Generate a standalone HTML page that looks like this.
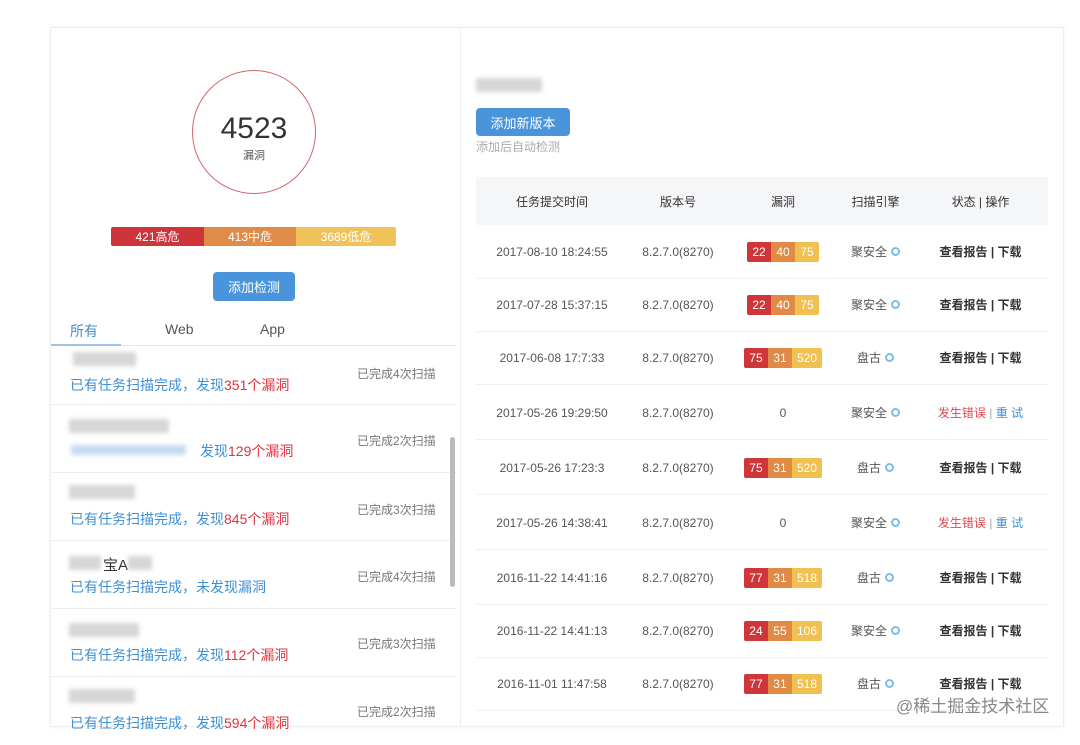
<!DOCTYPE html>
<html><head><meta charset="utf-8"><style>
*{margin:0;padding:0;box-sizing:border-box}
body{width:1080px;height:737px;background:#fff;font-family:"Liberation Sans","Noto Sans CJK SC",sans-serif;position:relative;overflow:hidden;color:#333}
.a{position:absolute}
.card{left:50px;top:27px;width:1014px;height:700px;border:1px solid #eee;box-shadow:0 0 4px rgba(0,0,0,.05)}
.blur{background:#ccc;filter:blur(2px);opacity:.8}
.li{left:51px;width:405px;height:68px;border-bottom:1px solid #eee}
.li .t{position:absolute;left:19px;top:30px;font-size:14px;color:#3d8fd6}
.li .t b{font-weight:normal;color:#e0333f}
.li .c{position:absolute;left:306px;top:20px;font-size:12px;color:#777}
.hd{left:476px;top:177px;width:572px;height:48px;background:#f5f6f8;font-size:12px;color:#333}
.row{left:476px;width:572px;height:54px;border-bottom:1px solid #f0f0f0;font-size:12px;color:#555}
.cell{position:absolute;top:0;height:100%;display:flex;align-items:center;justify-content:center}
.bd{display:flex;height:20px;border-radius:2px;overflow:hidden;color:#fff;font-size:12px}
.bd span{display:flex;align-items:center;justify-content:center;padding:0 5px;min-width:24px}
.r{background:#d0353a}.o{background:#e08a45}.y{background:#f0c050}
.eng i{display:inline-block;width:9px;height:9px;border:2px solid #7bbde8;border-radius:50%;margin-left:4px;position:relative}
.op{color:#333;font-weight:600}
.err{color:#e0474c}.rt{color:#3d8fd6}
</style></head><body>
<div class="a card"></div>
<div class="a" style="left:460px;top:28px;width:1px;height:698px;background:#f0f0f0"></div>
<div class="a" style="left:192px;top:70px;width:124px;height:124px;border:1.5px solid #d4646f;border-radius:50%"></div>
<div class="a" style="left:192px;top:112px;width:124px;text-align:center;font-size:30px;color:#333">4523</div>
<div class="a" style="left:192px;top:147px;width:124px;text-align:center;font-size:11px;color:#555">漏洞</div>
<div class="a" style="left:111px;top:227px;width:285px;height:19px;display:flex;font-size:12px;color:#fff;border-radius:2px;overflow:hidden">
<div style="width:93px;background:#cd353b;display:flex;align-items:center;justify-content:center">421高危</div>
<div style="width:92px;background:#e08c48;display:flex;align-items:center;justify-content:center">413中危</div>
<div style="flex:1;background:#f0c25a;display:flex;align-items:center;justify-content:center">3689低危</div></div>
<div class="a" style="left:213px;top:272px;width:82px;height:29px;background:#4a94dc;border-radius:4px;color:#fff;font-size:13px;display:flex;align-items:center;justify-content:center">添加检测</div>
<div class="a" style="left:70px;top:321px;font-size:14px;color:#3d8fd6">所有</div>
<div class="a" style="left:165px;top:321px;font-size:14px;color:#555">Web</div>
<div class="a" style="left:260px;top:321px;font-size:14px;color:#555">App</div>
<div class="a" style="left:51px;top:345px;width:405px;height:1px;background:#e6e6e6"></div>
<div class="a" style="left:51px;top:344px;width:70px;height:2px;background:#9cc4ea"></div>

<div class="a li" style="top:346px;height:59px"><div class="a blur" style="left:22px;top:6px;width:63px;height:14px"></div><div class="t" style="top:29px">已有任务扫描完成，发现<b>351个漏洞</b></div><div class="c" style="top:19px">已完成4次扫描</div></div>
<div class="a li" style="top:405px"><div class="a blur" style="left:18px;top:14px;width:100px;height:14px"></div><div class="a blur" style="left:20px;top:40px;width:115px;height:10px;background:#b7d2ee"></div><div class="t" style="left:149px;top:36px">发现<b>129个漏洞</b></div><div class="c" style="top:27px">已完成2次扫描</div></div>
<div class="a li" style="top:473px"><div class="a blur" style="left:18px;top:12px;width:66px;height:14px"></div><div class="t" style="top:36px">已有任务扫描完成，发现<b>845个漏洞</b></div><div class="c" style="top:28px">已完成3次扫描</div></div>
<div class="a li" style="top:541px"><div class="a blur" style="left:18px;top:15px;width:32px;height:14px"></div><div class="a" style="left:52px;top:13px;font-size:15px;color:#333">宝A</div><div class="a blur" style="left:77px;top:15px;width:24px;height:14px"></div><div class="t" style="top:36px">已有任务扫描完成，未发现漏洞</div><div class="c" style="top:27px">已完成4次扫描</div></div>
<div class="a li" style="top:609px"><div class="a blur" style="left:18px;top:14px;width:70px;height:14px"></div><div class="t" style="top:36px">已有任务扫描完成，发现<b>112个漏洞</b></div><div class="c" style="top:26px">已完成3次扫描</div></div>
<div class="a li" style="top:677px;border:none"><div class="a blur" style="left:18px;top:12px;width:66px;height:14px"></div><div class="t" style="top:36px">已有任务扫描完成，发现<b>594个漏洞</b></div><div class="c" style="top:26px">已完成2次扫描</div></div>
<div class="a" style="left:450px;top:437px;width:5px;height:150px;background:#bbb;border-radius:3px"></div>

<div class="a blur" style="left:476px;top:78px;width:66px;height:14px"></div>
<div class="a" style="left:476px;top:108px;width:94px;height:28px;background:#4a94dc;border-radius:4px;color:#fff;font-size:13px;display:flex;align-items:center;justify-content:center">添加新版本</div>
<div class="a" style="left:476px;top:138px;font-size:12px;color:#aaa">添加后自动检测</div>

<div class="a hd">
<div class="cell" style="left:0;width:152px">任务提交时间</div>
<div class="cell" style="left:152px;width:100px">版本号</div>
<div class="cell" style="left:252px;width:110px">漏洞</div>
<div class="cell" style="left:362px;width:75px">扫描引擎</div>
<div class="cell" style="left:437px;width:135px">状态 | 操作</div></div>

<div id="rows"></div>
<script>
var d=[["2017-08-10 18:24:55",[22,40,75],"聚安全",0,252],["2017-07-28 15:37:15",[22,40,75],"聚安全",0,305],["2017-06-08 17:7:33",[75,31,520],"盘古",0,358],["2017-05-26 19:29:50",null,"聚安全",1,413],["2017-05-26 17:23:3",[75,31,520],"盘古",0,468],["2017-05-26 14:38:41",null,"聚安全",1,523],["2016-11-22 14:41:16",[77,31,518],"盘古",0,578],["2016-11-22 14:41:13",[24,55,106],"聚安全",0,631],["2016-11-01 11:47:58",[77,31,518],"盘古",0,684]];
var h="";d.forEach(function(r){var b=r[1]?'<div class="bd"><span class="r">'+r[1][0]+'</span><span class="o">'+r[1][1]+'</span><span class="y">'+r[1][2]+'</span></div>':'0';
var s=r[3]?'<span class="err">发生错误</span>&nbsp;<span style="color:#aaa">|</span>&nbsp;<span class="rt">重 试</span>':'<span class="op">查看报告 | 下载</span>';
h+='<div class="a row" style="top:'+(r[4]-27)+'px"><div class="cell" style="left:0;width:152px">'+r[0]+'</div><div class="cell" style="left:152px;width:100px">8.2.7.0(8270)</div><div class="cell" style="left:252px;width:110px">'+b+'</div><div class="cell eng" style="left:362px;width:75px">'+r[2]+'<i></i></div><div class="cell" style="left:437px;width:135px">'+s+'</div></div>';});
document.getElementById("rows").innerHTML=h;
</script>
<div class="a" style="left:896px;top:692px;font-size:17px;color:#888;text-shadow:0 0 2px #fff">@稀土掘金技术社区</div>
</body></html>
